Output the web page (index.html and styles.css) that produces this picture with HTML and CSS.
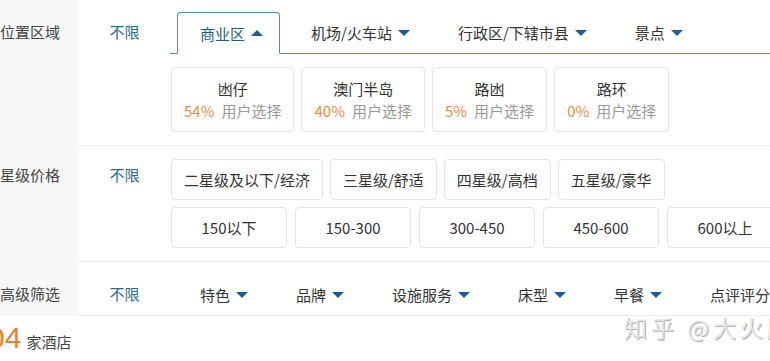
FILE: index.html
```html
<!DOCTYPE html>
<html lang="zh-CN">
<head>
<meta charset="utf-8">
<link rel="stylesheet" href="styles.css">
</head>
<body>
<div class="filter">
  <div class="row">
    <div class="label row-top">位置区域</div>
    <div class="body">
      <div class="any row-top">不限</div>
      <div class="content">
        <div class="tabbar">
          <div class="tab active">商业区 <svg class="tri" viewBox="0 0 12 6"><polygon points="0,6 12,6 6,0"/></svg></div>
          <div class="tab">机场/火车站 <svg class="tri" viewBox="0 0 12 6"><polygon points="0,0 12,0 6,6"/></svg></div>
          <div class="tab">行政区/下辖市县 <svg class="tri" viewBox="0 0 12 6"><polygon points="0,0 12,0 6,6"/></svg></div>
          <div class="tab">景点 <svg class="tri" viewBox="0 0 12 6"><polygon points="0,0 12,0 6,6"/></svg></div>
        </div>
        <div class="areas">
          <div class="area"><div class="name">凼仔</div><div class="pct"><span class="num">54%</span>用户选择</div></div>
          <div class="area"><div class="name">澳门半岛</div><div class="pct"><span class="num">40%</span>用户选择</div></div>
          <div class="area"><div class="name">路凼</div><div class="pct"><span class="num">5%</span>用户选择</div></div>
          <div class="area"><div class="name">路环</div><div class="pct"><span class="num">0%</span>用户选择</div></div>
        </div>
      </div>
    </div>
  </div>
  <div class="row">
    <div class="label row-mid">星级价格</div>
    <div class="body">
      <div class="any row-mid">不限</div>
      <div class="content stars">
        <div class="btns">
          <div class="btn">二星级及以下/经济</div>
          <div class="btn">三星级/舒适</div>
          <div class="btn">四星级/高档</div>
          <div class="btn">五星级/豪华</div>
        </div>
        <div class="btns prices">
          <div class="btn price">150以下</div>
          <div class="btn price">150-300</div>
          <div class="btn price">300-450</div>
          <div class="btn price">450-600</div>
          <div class="btn price">600以上</div>
        </div>
      </div>
    </div>
  </div>
  <div class="row">
    <div class="label row-top">高级筛选</div>
    <div class="body">
      <div class="any row-top">不限</div>
      <div class="content">
        <div class="adv">
          <div class="tab">特色 <svg class="tri" viewBox="0 0 12 6"><polygon points="0,0 12,0 6,6"/></svg></div>
          <div class="tab">品牌 <svg class="tri" viewBox="0 0 12 6"><polygon points="0,0 12,0 6,6"/></svg></div>
          <div class="tab">设施服务 <svg class="tri" viewBox="0 0 12 6"><polygon points="0,0 12,0 6,6"/></svg></div>
          <div class="tab">床型 <svg class="tri" viewBox="0 0 12 6"><polygon points="0,0 12,0 6,6"/></svg></div>
          <div class="tab">早餐 <svg class="tri" viewBox="0 0 12 6"><polygon points="0,0 12,0 6,6"/></svg></div>
          <div class="tab">点评评分</div>
        </div>
      </div>
    </div>
  </div>
</div>
<div class="result"><span class="count">04</span><span class="unit">家酒店</span></div>
<div class="watermark">知乎 @大火腿</div>
</body>
</html>
```

FILE: styles.css
```css
html, body {
  margin: 0;
  padding: 0;
}
body {
  width: 770px;
  height: 361px;
  overflow: hidden;
  position: relative;
  background: #fff;
  font-family: "Noto Sans CJK SC", "Noto Sans", sans-serif;
  font-size: 15px;
  color: #333;
}
.row {
  display: flex;
}
.label {
  width: 79px;
  flex: none;
  background: #f7f7f7;
  color: #444;
  line-height: 41px;
  white-space: nowrap;
}
.row-top { padding-top: 11px; }
.row-mid { padding-top: 8px; }
.body {
  flex: 1;
  min-width: 0;
  display: flex;
  border-bottom: 1px solid #ececec;
}
.any {
  width: 91px;
  flex: none;
  text-align: center;
  line-height: 41px;
  color: #2b6c8a;
}
.content {
  flex: 1;
  min-width: 0;
}
.tabbar {
  margin-top: 12px;
  display: flex;
  gap: 8px;
  padding-left: 7px;
  border-bottom: 1px solid #5e89a8;
  white-space: nowrap;
}
.tab {
  height: 41px;
  box-sizing: border-box;
  display: flex;
  align-items: center;
  gap: 6px;
  padding: 0 17px 0 23px;
  white-space: nowrap;
  color: #333;
}
.tab.active {
  height: 42px;
  margin-bottom: -1px;
  border: 1px solid #5e89a8;
  border-bottom-color: #fff;
  border-radius: 4px 4px 0 0;
  padding: 0 16px 0 22px;
  background: #fff;
  color: #1f5c84;
}
.tri {
  width: 12px;
  height: 6px;
  fill: #1d5c9a;
  flex: none;
}
.areas {
  display: flex;
  gap: 7px;
  padding: 13px 0 13px 1px;
}
.area {
  border: 1px solid #e4e4e4;
  border-radius: 4px;
  padding: 10px 12px 9px;
  text-align: center;
  line-height: 22px;
  white-space: nowrap;
}
.name { color: #333; }
.pct { color: #999; }
.num {
  color: #ef8b40;
  margin-right: 7px;
}
.stars {
  padding: 13px 0 13px 1px;
  display: flex;
  flex-direction: column;
  gap: 7px;
}
.btns {
  display: flex;
  gap: 7px;
  white-space: nowrap;
}
.prices { gap: 8px; }
.btn {
  height: 41px;
  box-sizing: border-box;
  border: 1px solid #e4e4e4;
  border-radius: 4px;
  padding: 0 12px;
  display: flex;
  align-items: center;
  justify-content: center;
  flex: none;
}
.btn.price {
  width: 116px;
  padding: 0;
}
.adv {
  margin-top: 12px;
  display: flex;
  gap: 8px;
  padding-left: 7px;
  white-space: nowrap;
}
.result {
  display: flex;
  align-items: baseline;
  gap: 5px;
  padding-top: 5px;
}
.count {
  margin-left: -12px;
  font-family: "Liberation Sans", Arial, sans-serif;
  font-size: 30px;
  line-height: 34px;
  color: #e8812e;
}
.unit {
  font-size: 15px;
  color: #444;
}
.watermark {
  position: absolute;
  left: 624px;
  top: 310px;
  font-size: 23px;
  letter-spacing: 4px;
  color: #e6e6e6;
  text-shadow: 1px 1px 0 #b0b0b0;
  white-space: nowrap;
}
```
